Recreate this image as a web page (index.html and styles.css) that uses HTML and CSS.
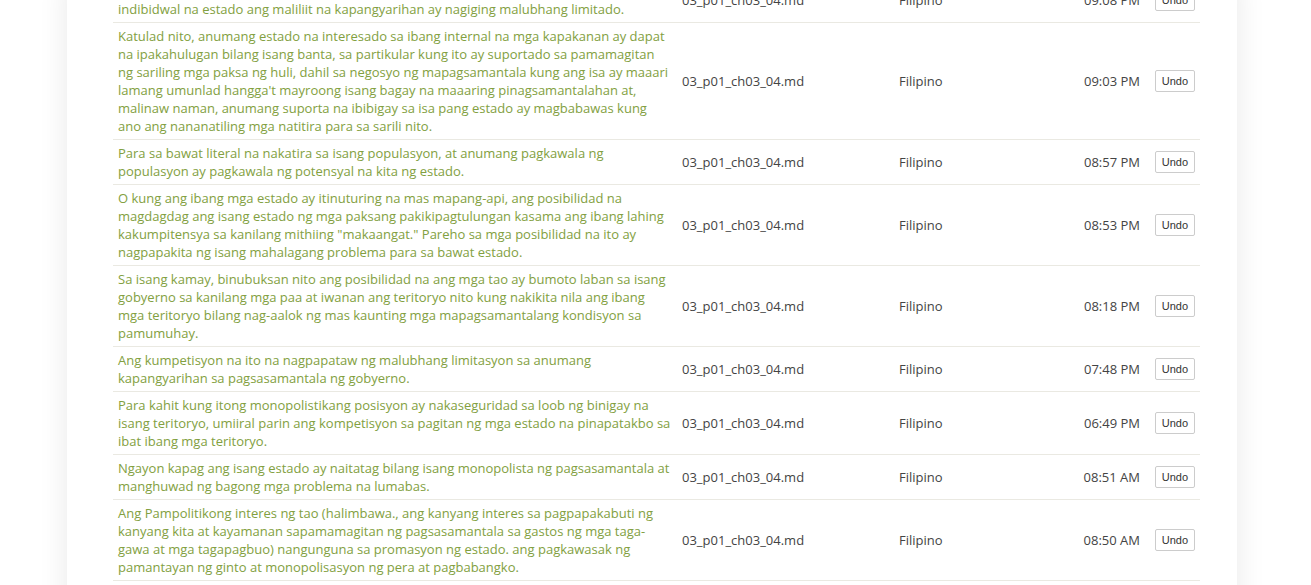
FILE: index.html
```html
<!DOCTYPE html>
<html>
<head>
<meta charset="utf-8">
<link rel="stylesheet" href="styles.css">
</head>
<body>
<div class="page">
  <div class="panel">
    <table class="log">
      <colgroup>
        <col class="c-text"><col class="c-file"><col class="c-lang"><col class="c-time"><col class="c-act">
      </colgroup>
      <tbody>
        <tr>
          <td class="txt">Sa harap ng kompetisyon ng ibang mga estado, ang kapangyarihan ng bawat<br>indibidwal na estado ang maliliit na kapangyarihan ay nagiging malubhang limitado.</td>
          <td>03_p01_ch03_04.md</td><td>Filipino</td><td class="time">09:08 PM</td><td class="act"><button class="undo">Undo</button></td>
        </tr>
        <tr>
          <td class="txt">Katulad nito, anumang estado na interesado sa ibang internal na mga kapakanan ay dapat na ipakahulugan bilang isang banta, sa partikular kung ito ay suportado sa pamamagitan ng sariling mga paksa ng huli, dahil sa negosyo ng mapagsamantala kung ang isa ay maaari lamang umunlad hangga't mayroong isang bagay na maaaring pinagsamantalahan at, malinaw naman, anumang suporta na ibibigay sa isa pang estado ay magbabawas kung ano ang nananatiling mga natitira para sa sarili nito.</td>
          <td>03_p01_ch03_04.md</td><td>Filipino</td><td class="time">09:03 PM</td><td class="act"><button class="undo">Undo</button></td>
        </tr>
        <tr>
          <td class="txt">Para sa bawat literal na nakatira sa isang populasyon, at anumang pagkawala ng populasyon ay pagkawala ng potensyal na kita ng estado.</td>
          <td>03_p01_ch03_04.md</td><td>Filipino</td><td class="time">08:57 PM</td><td class="act"><button class="undo">Undo</button></td>
        </tr>
        <tr>
          <td class="txt">O kung ang ibang mga estado ay itinuturing na mas mapang-api, ang posibilidad na magdagdag ang isang estado ng mga paksang pakikipagtulungan kasama ang ibang lahing kakumpitensya sa kanilang mithiing "makaangat." Pareho sa mga posibilidad na ito ay nagpapakita ng isang mahalagang problema para sa bawat estado.</td>
          <td>03_p01_ch03_04.md</td><td>Filipino</td><td class="time">08:53 PM</td><td class="act"><button class="undo">Undo</button></td>
        </tr>
        <tr>
          <td class="txt">Sa isang kamay, binubuksan nito ang posibilidad na ang mga tao ay bumoto laban sa isang gobyerno sa kanilang mga paa at iwanan ang teritoryo nito kung nakikita nila ang ibang mga teritoryo bilang nag-aalok ng mas kaunting mga mapagsamantalang kondisyon sa pamumuhay.</td>
          <td>03_p01_ch03_04.md</td><td>Filipino</td><td class="time">08:18 PM</td><td class="act"><button class="undo">Undo</button></td>
        </tr>
        <tr>
          <td class="txt">Ang kumpetisyon na ito na nagpapataw ng malubhang limitasyon sa anumang kapangyarihan sa pagsasamantala ng gobyerno.</td>
          <td>03_p01_ch03_04.md</td><td>Filipino</td><td class="time">07:48 PM</td><td class="act"><button class="undo">Undo</button></td>
        </tr>
        <tr>
          <td class="txt">Para kahit kung itong monopolistikang posisyon ay nakaseguridad sa loob ng binigay na isang teritoryo, umiiral parin ang kompetisyon sa pagitan ng mga estado na pinapatakbo sa ibat ibang mga teritoryo.</td>
          <td>03_p01_ch03_04.md</td><td>Filipino</td><td class="time">06:49 PM</td><td class="act"><button class="undo">Undo</button></td>
        </tr>
        <tr>
          <td class="txt">Ngayon kapag ang isang estado ay naitatag bilang isang monopolista ng pagsasamantala at manghuwad ng bagong mga problema na lumabas.</td>
          <td>03_p01_ch03_04.md</td><td>Filipino</td><td class="time">08:51 AM</td><td class="act"><button class="undo">Undo</button></td>
        </tr>
        <tr>
          <td class="txt">Ang Pampolitikong interes ng tao (halimbawa., ang kanyang interes sa pagpapakabuti ng kanyang kita at kayamanan sapamamagitan ng pagsasamantala sa gastos ng mga taga-gawa at mga tagapagbuo) nangunguna sa promasyon ng estado. ang pagkawasak ng pamantayan ng ginto at monopolisasyon ng pera at pagbabangko.</td>
          <td>03_p01_ch03_04.md</td><td>Filipino</td><td class="time">08:50 AM</td><td class="act"><button class="undo">Undo</button></td>
        </tr>
        <tr>
          <td class="txt">Ang estado ay hindi maaaring umiral nang walang pagsasamantala, at ang bawat estado ay naghahanap ng mga paraan upang palawakin ang kapangyarihan nito sa ibang mga teritoryo.</td>
          <td>03_p01_ch03_04.md</td><td>Filipino</td><td class="time">08:47 AM</td><td class="act"><button class="undo">Undo</button></td>
        </tr>
      </tbody>
    </table>
  </div>
</div>
</body>
</html>
```

FILE: styles.css
```css
html, body {
  margin: 0;
  padding: 0;
  background: #ffffff;
  overflow: hidden;
}

.page {
  height: 585px;
  overflow: hidden;
}

.panel {
  margin-left: 67px;
  width: 1170px;
  box-sizing: border-box;
  padding: 0 37px 40px 46px;
  margin-top: -22px;
  background: #ffffff;
  box-shadow: 0 0 28px rgba(0, 0, 0, 0.09);
}

.log {
  width: 1087px;
  table-layout: fixed;
  border-collapse: collapse;
  font-family: "Open Sans", "Liberation Sans", sans-serif;
  font-size: 13px;
  line-height: 18px;
  color: #444444;
}

.c-text { width: 564px; }
.c-file { width: 217px; }
.c-lang { width: 146px; }
.c-time { width: 105px; }
.c-act { width: 55px; }

.log td {
  padding: 4px 5px;
  border-bottom: 1px solid #eae9e2;
  vertical-align: middle;
}

.log td.txt {
  color: #82a041;
}

.log td.time {
  text-align: right;
}

.log td.act {
  text-align: right;
}

.undo {
  display: inline-block;
  height: 22px;
  padding: 0 6px;
  margin: 0;
  font-family: "Liberation Sans", Arial, sans-serif;
  font-size: 11px;
  color: #333333;
  background: #ffffff;
  border: 1px solid #cccccc;
  border-radius: 2px;
  vertical-align: middle;
}
```
